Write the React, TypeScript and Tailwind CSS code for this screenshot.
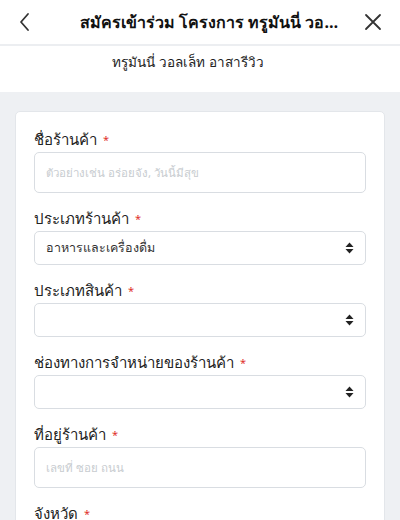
import React from "react";

type Field = { label: string; kind: "input" | "select"; value?: string; placeholder?: string };

const fields: Field[] = [
  { label: "ชื่อร้านค้า", kind: "input", placeholder: "ตัวอย่างเช่น อร่อยจัง, วันนี้มีสุข" },
  { label: "ประเภทร้านค้า", kind: "select", value: "อาหารและเครื่องดื่ม" },
  { label: "ประเภทสินค้า", kind: "select" },
  { label: "ช่องทางการจำหน่ายของร้านค้า", kind: "select" },
  { label: "ที่อยู่ร้านค้า", kind: "input", placeholder: "เลขที่ ซอย ถนน" },
  { label: "จังหวัด", kind: "select" },
];

function SortArrows() {
  return (
    <svg width="9" height="12" viewBox="0 0 9 12" fill="#222">
      <path d="M4.5 0.5 L8.5 5 H0.5 Z" />
      <path d="M4.5 11.5 L8.5 7 H0.5 Z" />
    </svg>
  );
}

export default function App() {
  return (
    <div className="w-[400px] h-[520px] overflow-hidden bg-[#eef0f3] font-['Noto_Sans',sans-serif] text-[#222]">
      {/* header */}
      <div className="bg-white">
        <div className="h-[44px] flex items-center px-[18px]">
          <svg width="14" height="20" viewBox="0 0 14 20" fill="none" stroke="#333" strokeWidth="1.8" strokeLinecap="round" strokeLinejoin="round">
            <path d="M10 2 L3 10 L10 18" />
          </svg>
          <div className="flex-1 pl-[48px] pr-[22px] text-[16px] font-bold text-[#111] truncate text-center">
            สมัครเข้าร่วม โครงการ ทรูมันนี่ วอลเล็ท อาสารีวิว
          </div>
          <svg width="18" height="18" viewBox="0 0 18 18" fill="none" stroke="#333" strokeWidth="1.8" strokeLinecap="round">
            <path d="M2 2 L16 16 M16 2 L2 16" />
          </svg>
        </div>
        <div className="h-[2px] bg-[#eceef1]" />
        <div className="h-[46px] pt-[6px] pr-[24px] text-center text-[13.5px] text-[#222]">
          ทรูมันนี่ วอลเล็ท อาสารีวิว
        </div>
      </div>

      {/* form card */}
      <div className="pt-[19px] px-[15px]">
        <div className="bg-white border border-[#e3e6ea] rounded-[5px] px-[18px] pt-[17px] pb-6 flex flex-col gap-[15px]">
          {fields.map((f) => (
            <div key={f.label} className="flex flex-col gap-[2px]">
              <div className="leading-[21px] text-[15px] text-[#222]">
                {f.label}
                <span className="text-[#e0322b] text-[11px] align-top ml-[6px]">*</span>
              </div>
              {f.kind === "input" ? (
                <div className="h-[41px] border border-[#d9dde2] rounded-[5px] flex items-center px-[11px] text-[11.5px] text-[#c8ccd0]">
                  {f.placeholder}
                </div>
              ) : (
                <div className="h-[34px] border border-[#d9dde2] rounded-[5px] flex items-center justify-between pl-[11px] pr-[11px] text-[12.5px] text-[#333]">
                  <span>{f.value ?? ""}</span>
                  <SortArrows />
                </div>
              )}
            </div>
          ))}
        </div>
      </div>
    </div>
  );
}
